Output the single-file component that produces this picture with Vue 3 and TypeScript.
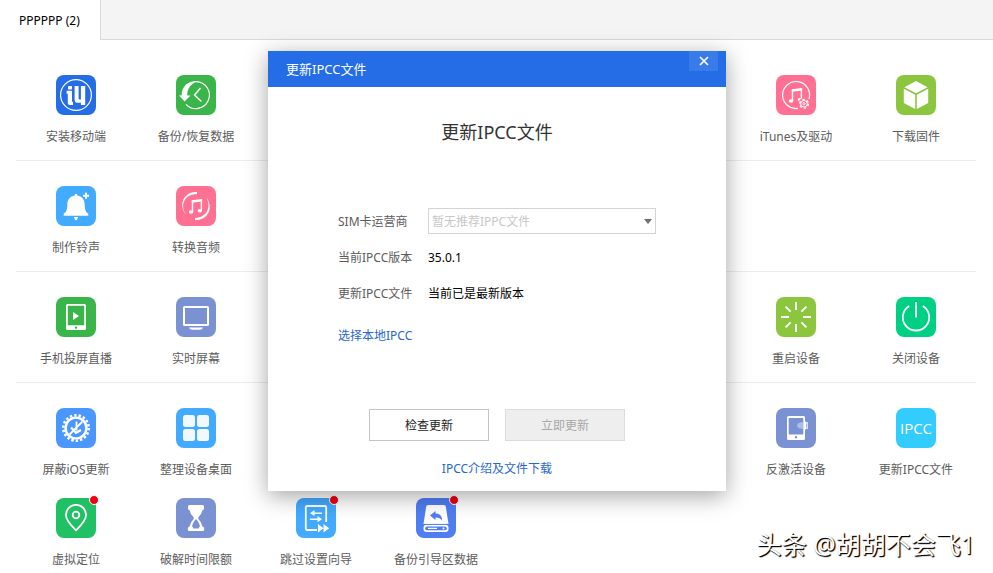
<script setup lang="ts">
import { ref } from 'vue'

interface Tool {
  label: string
  icon: string
  tone: string
  column: number
  isNew?: boolean
}

const deviceName = ref('PPPPPP (2)')
const carrier = ref('')
const currentVersion = ref('35.0.1')
const updateStatus = ref('当前已是最新版本')
const dialogOpen = ref(true)

const note =
  '<path d="M16.500 14.500v11.500M25.400 13.500v11" fill="none" stroke="#fff" stroke-width="1.400"/><path d="M15.800 14.200 26.100 13v2.600L15.800 16.800z" fill="#fff"/><ellipse cx="15" cy="26" rx="2.200" ry="1.800" fill="#fff"/><ellipse cx="23.900" cy="24.800" rx="2.200" ry="1.800" fill="#fff"/>'

const icons: Record<string, string> = {
  mobile:
    '<g fill="#fff"><circle cx="20" cy="20" r="15.4" fill="none" stroke="#fff" stroke-width="1.2"/><rect x="12" y="11" width="4" height="3.4" rx=".6"/><path d="M10.6 15.8H16v11h1V30h-3.4q-1.8 0-1.8-1.8v-9.4h-1.2z"/><path d="M18.6 11h4v12.6q0 1 1 1h1.3V11h4.3v19h-4.3v-2.2h-3.2q-3.1 0-3.1-3.1z"/></g>',
  restore:
    '<g fill="none" stroke="#fff"><path d="M20 6.6A13.5 13.5 0 1 1 10 29.3" stroke-width="1.2"/><path d="M24.5 13 18.5 20l7 6.5" stroke-width="1.4"/></g><path d="M22 6.2C13 5.4 5.4 11 5.6 20.5H3L8.600 26.500 14.500 20.500H11.300C11 14 14.600 8.200 22 6.200z" fill="#fff"/>',
  bell:
    '<g fill="#fff"><path d="M20 7.800q1.400 0 1.400 1.700C26 10.300 28.700 14 28.700 18.200c0 5 .8 7.800 3.600 9.600v2H7.700v-2c2.800-1.800 3.600-4.600 3.600-9.600 0-4.200 2.700-7.900 7.300-8.700Q18.600 7.800 20 7.800z"/><path d="M18 31h4l-.7 2.200L20 34.500l-1.300-1.300z"/></g><path d="M30 6.800v6M27 9.800h6" stroke="#fff" stroke-width="2"/>',
  audio:
    '<g fill="#fff"><path d="M21 6C11 5.500 5 13 6.500 21.500c.6 3.500 2 5.500 3.500 7C4 20 7.500 8.500 21 8z"/><path d="M19 34C29 34.500 35 27 33.500 18.500c-.6-3.500-2-6-4.500-8.500C36 18 32.500 31.500 19 32z"/></g>' + note,
  cast:
    '<path fill="#fff" fill-rule="evenodd" d="M11.500 7h17q1.500 0 1.500 1.500v23q0 1.500-1.500 1.500h-17q-1.500 0-1.500-1.500v-23Q10 7 11.500 7zm.3 1.800v19.400h16.400V8.800zM20 29.400a1.200 1.200 0 1 0 0 2.400 1.200 1.200 0 0 0 0-2.400z"/><path fill="#fff" d="M17 15v8l6-4z"/>',
  screen:
    '<rect x="8" y="10" width="24" height="18" rx=".6" fill="none" stroke="#fff" stroke-width="2"/><path d="M13 30.500h14q-.5 2.300-3.500 2.300h-7q-3 0-3.500-2.300z" fill="#fff"/>',
  gear:
    '<g fill="none" stroke="#fff"><circle cx="20" cy="20" r="12.700" stroke-width="2.600" stroke-dasharray="2.400 2.032"/><circle cx="20" cy="20" r="10.400" stroke-width="2.400"/><path d="M26.500 13.500 13.500 26.500M20.500 13.500v9" stroke-width="1.800"/><path d="M15 19.500 20 24.800 25 22" stroke-width="2.200"/></g>',
  desktop:
    '<g fill="#fff" opacity=".93"><rect x="7" y="7" width="12" height="12" rx="2.500"/><rect x="21" y="7" width="12" height="12" rx="2.500"/><rect x="7" y="21" width="12" height="12" rx="2.500"/><rect x="21" y="21" width="12" height="12" rx="2.500"/></g>',
  pin:
    '<g fill="none" stroke="#fff" stroke-width="1.800"><path d="M20 32.300C15 27.500 9.900 22.300 9.900 17a10.100 10.100 0 0 1 20.200 0C30.100 22.300 25 27.500 20 32.300z"/><circle cx="20" cy="17" r="3.300"/></g>',
  hourglass:
    '<path fill="#fff" d="M13.500 7h13q1.500 0 1.500 1.500v2q0 1.500-1.500 1.500-.8 4.500-4.200 7.200V21q3.400 3 4.200 7.500 1.700.5 1.700 2v1q0 1.500-1.700 1.500h-13q-1.700 0-1.700-1.500v-1q0-1.500 1.700-2Q14.300 24 17.700 21v-1.800Q14.300 16.500 13.500 12 12 12 12 10.500v-2Q12 7 13.500 7z"/><path d="M19.400 21.500h1.200q2.700 3.500 3.400 6.500l-1.500 2.500h-5L16 28q.7-3 3.400-6.500z" fill="#7b92d2"/>',
  wizard:
    '<path d="M21 32H11q-1.200 0-1.200-1.200V9.200Q9.800 8 11 8h18q1.200 0 1.200 1.200V24" fill="none" stroke="#fff" stroke-width="1.800"/><path d="M15 15.200h11M14 21.200h11" stroke="#fff" stroke-width="1.600"/><path fill="#fff" d="M18.500 12v6L14 15.200zM21.500 18v6.300l4.500-3.100zM22 26l5.500 4.200L22 34.500zM27.500 26l5.700 4.200-5.700 4.300z"/>',
  disk:
    '<path fill="#fff" d="M12 7h16q1.600 0 1.800 1.600L32.500 26h-25l2.700-17.400Q10.400 7 12 7z"/><rect x="7.500" y="26.800" width="25" height="7.200" rx="3" fill="#fff"/><path d="M8 26.400h24" stroke="#4f7df2" stroke-width=".8"/><rect x="9.200" y="28.500" width="21.600" height="3.800" rx="1.900" fill="#4f7df2"/><path d="M12 30.400h9" stroke="#fff" stroke-width="1.200"/><circle cx="27.500" cy="30.400" r="1" fill="#fff"/><path fill="#4f7df2" d="M14 17.500 19.500 13v2.600c4.200 0 6.600 2.400 6.600 7.200-1.600-2.700-3.600-3.400-6.600-3.300V22z"/>',
  itunes:
    '<path d="M22 33.400A13.500 13.500 0 1 1 33 24" fill="none" stroke="#fff" stroke-width="1.200"/>' + note +
    '<circle cx="28" cy="28.800" r="5.800" fill="#ff7092"/><g fill="none" stroke="#fff"><circle cx="28" cy="28.800" r="3.300" stroke-width="1"/><circle cx="28" cy="28.800" r="4.300" stroke-width="1.400" stroke-dasharray="2.400 2.100"/><circle cx="28" cy="28.800" r="1.200" stroke-width=".9"/></g>',
  cube:
    '<path fill="#fff" d="M20 6l11.600 6.200L20 18.200 8.400 12.200zM7.800 13.800l11.400 6V34L7.800 28zM32.200 13.800l-11.400 6V34l11.400-6z"/>',
  restart:
    '<path d="M20 5v8M20 27v8M5 20h8M27 20h8M9.600 9.600l5 5M25.400 25.400l5 5M9.600 30.400l5-5M25.400 14.600l5-5" stroke="#fff" stroke-width="1.900"/>',
  power:
    '<g fill="none" stroke="#fff" stroke-width="1.800"><path d="M13.200 9A13.200 13.200 0 1 0 26.800 9"/><path d="M20 5v15.500"/></g>',
  deactivate:
    '<path fill="#fff" fill-rule="evenodd" d="M12.500 8h15q1.500 0 1.500 1.500v21q0 1.500-1.500 1.500h-15q-1.500 0-1.500-1.500v-21Q11 8 12.500 8zm.2 1.900v16.600h14.600V9.900zM20 28a1.200 1.200 0 1 0 0 2.400 1.200 1.200 0 0 0 0-2.400z"/><path d="M27 14q-6 .5-6 3.500t6 3.500z" fill="#fff" opacity=".4"/><path d="M28 13.500h2v8h-2z" fill="#fff"/><path d="M30 15h1.300M30 20h1.300M31.200 14v7" stroke="#fff" stroke-width="1"/>',
  ipcc:
    '<text x="20" y="25.500" text-anchor="middle" font-family="Open Sans, Noto Sans, sans-serif" font-size="15" font-weight="500" fill="#fff">IPCC</text>',
}

const groups: Tool[][] = [
  [
    { label: '安装移动端', icon: 'mobile', tone: 'royal', column: 1 },
    { label: '备份/恢复数据', icon: 'restore', tone: 'green', column: 2 },
    { label: 'iTunes及驱动', icon: 'itunes', tone: 'pink', column: 7 },
    { label: '下载固件', icon: 'cube', tone: 'lime', column: 8 },
  ],
  [
    { label: '制作铃声', icon: 'bell', tone: 'sky', column: 1 },
    { label: '转换音频', icon: 'audio', tone: 'pink', column: 2 },
  ],
  [
    { label: '手机投屏直播', icon: 'cast', tone: 'green', column: 1 },
    { label: '实时屏幕', icon: 'screen', tone: 'slate', column: 2 },
    { label: '重启设备', icon: 'restart', tone: 'lime', column: 7 },
    { label: '关闭设备', icon: 'power', tone: 'teal', column: 8 },
  ],
  [
    { label: '屏蔽iOS更新', icon: 'gear', tone: 'azure', column: 1 },
    { label: '整理设备桌面', icon: 'desktop', tone: 'sky', column: 2 },
    { label: '反激活设备', icon: 'deactivate', tone: 'slate', column: 7 },
    { label: '更新IPCC文件', icon: 'ipcc', tone: 'cyan', column: 8 },
    { label: '虚拟定位', icon: 'pin', tone: 'emerald', column: 1, isNew: true },
    { label: '破解时间限额', icon: 'hourglass', tone: 'slate', column: 2 },
    { label: '跳过设置向导', icon: 'wizard', tone: 'sky', column: 3, isNew: true },
    { label: '备份引导区数据', icon: 'disk', tone: 'indigo', column: 4, isNew: true },
  ],
]
</script>

<template>
  <div class="app">
    <header class="tabs">
      <button type="button" class="tab">{{ deviceName }}</button>
    </header>

    <main class="toolbox">
      <section v-for="(group, g) in groups" :key="g" class="group">
        <button
          v-for="tool in group"
          :key="tool.label"
          type="button"
          class="tool"
          :class="`col-${tool.column}`"
        >
          <span class="tile" :class="tool.tone">
            <svg viewBox="0 0 40 40" aria-hidden="true" v-html="icons[tool.icon]"></svg>
            <span v-if="tool.isNew" class="badge"></span>
          </span>
          <span class="tool-label">{{ tool.label }}</span>
        </button>
      </section>
    </main>

    <div v-if="dialogOpen" class="overlay">
      <section class="dialog" role="dialog" aria-labelledby="dialog-title">
        <header class="dialog-bar">
          <span id="dialog-title">更新IPCC文件</span>
          <button type="button" class="close" @click="dialogOpen = false">
            <svg viewBox="0 0 10 10" aria-hidden="true">
              <path d="M1 1l8 8M9 1L1 9" stroke="#fff" stroke-width="1.7" />
            </svg>
          </button>
        </header>

        <div class="dialog-body">
          <h1>更新IPCC文件</h1>

          <div class="fields">
            <label for="carrier">SIM卡运营商</label>
            <div class="picker">
              <select id="carrier" v-model="carrier" disabled>
                <option value="">暂无推荐IPPC文件</option>
              </select>
            </div>
            <span>当前IPCC版本</span>
            <output>{{ currentVersion }}</output>
            <span>更新IPCC文件</span>
            <output>{{ updateStatus }}</output>
          </div>

          <a class="local" href="#local">选择本地IPCC</a>

          <div class="actions">
            <button type="button">检查更新</button>
            <button type="button" disabled>立即更新</button>
          </div>

          <a class="about" href="#about">IPCC介绍及文件下载</a>
        </div>
      </section>
    </div>

    <p class="watermark">头条 @胡胡不会飞1</p>
  </div>
</template>

<style>
body {
  background: #fff;
  overflow: hidden;
}
</style>

<style scoped>
.app {
  position: relative;
  min-height: 100vh;
  font: 12px/20px 'Noto Sans', 'Noto Sans CJK SC', sans-serif;
  color: #5c5c5c;
}

button,
select {
  font: inherit;
  border-radius: 0;
}

a {
  color: #2a67c9;
  text-decoration: none;
}

.tabs {
  display: flex;
  height: 40px;
  background: #f4f4f4;
  box-shadow: inset 0 -1px #d9d9d9;
}

.tab {
  padding: 2px 20px 0 19px;
  min-width: 101px;
  text-align: left;
  color: #000;
  background: #fff;
  border: 0;
  border-right: 1px solid #d9d9d9;
}

.toolbox {
  padding: 10px 17px 0 16px;
}

.group {
  display: grid;
  grid-template-columns: repeat(8, minmax(0, 1fr));
  row-gap: 18px;
  padding: 25px 0 13px;
  border-bottom: 1px solid #ececec;
}

.group:last-child {
  border-bottom: 0;
}

.tool {
  display: flex;
  flex-direction: column;
  align-items: center;
  gap: 12px;
  padding: 0;
  color: inherit;
  background: none;
  border: 0;
  white-space: nowrap;
}

.col-1 { grid-column: 1; }
.col-2 { grid-column: 2; }
.col-3 { grid-column: 3; }
.col-4 { grid-column: 4; }
.col-7 { grid-column: 7; }
.col-8 { grid-column: 8; }

.tile {
  position: relative;
  width: 40px;
  height: 40px;
  border-radius: 8px;
}

.tile svg {
  display: block;
  width: 100%;
  height: 100%;
}

.royal { background: #246de6; }
.green { background: #3ab54a; }
.pink { background: #ff7092; }
.lime { background: #8cc63f; }
.sky { background: #42aaff; }
.slate { background: #7b92d2; }
.teal { background: #00d084; }
.azure { background: #4a98ff; }
.cyan { background: #33ccff; }
.emerald { background: #20c065; }
.indigo { background: #4f7df2; }

.badge {
  position: absolute;
  top: -3px;
  right: -3px;
  width: 8px;
  height: 8px;
  border: 1px solid #fff;
  border-radius: 50%;
  background: #f00010;
}

.overlay {
  position: absolute;
  inset: 0;
  display: flex;
  justify-content: center;
  align-items: flex-start;
  padding: 51px 0 0 1px;
}

.dialog {
  width: 458px;
  background: #fff;
  box-shadow: 0 5px 22px rgba(0, 0, 0, 0.36);
}

.dialog-bar {
  display: flex;
  justify-content: space-between;
  align-items: flex-start;
  padding: 0 8px 0 18px;
  font-size: 13px;
  line-height: 36px;
  color: #fff;
  background: #246de6;
}

.close {
  display: grid;
  place-items: center;
  width: 29px;
  height: 20px;
  padding: 0;
  border: 0;
  background: #387be9;
}

.close svg {
  width: 10px;
  height: 10px;
}

.dialog-body {
  display: flex;
  flex-direction: column;
  padding: 30px 70px 12px;
}

h1 {
  margin: 0 0 61px;
  font-size: 18px;
  font-weight: 400;
  line-height: 30px;
  text-align: center;
  color: #333;
}

.fields {
  display: grid;
  grid-template-columns: 90px 228px;
  grid-auto-rows: 26px;
  row-gap: 10px;
  line-height: 28px;
}

output {
  color: #000;
}

.picker {
  position: relative;
  height: 26px;
}

.picker::after {
  content: '';
  position: absolute;
  top: 11px;
  right: 4px;
  border: 4px solid transparent;
  border-top: 5px solid #707070;
  border-bottom: 0;
}

select {
  width: 100%;
  height: 100%;
  padding: 2px 20px 0 3px;
  line-height: 20px;
  color: #c8c8c8;
  opacity: 1;
  background: #fff;
  border: 1px solid #d4d4d4;
  appearance: none;
}

.local {
  align-self: flex-start;
  margin-top: 20px;
}

.actions {
  display: flex;
  justify-content: center;
  gap: 16px;
  margin: 63px 0 18px;
}

.actions button {
  width: 120px;
  height: 32px;
  padding: 2px 0 0;
  color: #222;
  background: #fff;
  border: 1px solid #c4c4c4;
}

.actions button:disabled {
  color: #a8a8a8;
  background: #eee;
  border-color: #dcdcdc;
}

.about {
  align-self: center;
}

.watermark {
  position: absolute;
  right: 18px;
  bottom: 22px;
  margin: 0;
  font-size: 25px;
  line-height: 34px;
  color: #fff;
  text-shadow: 1px 1px 1px #000, 1px 1px 1px #222;
}
</style>
